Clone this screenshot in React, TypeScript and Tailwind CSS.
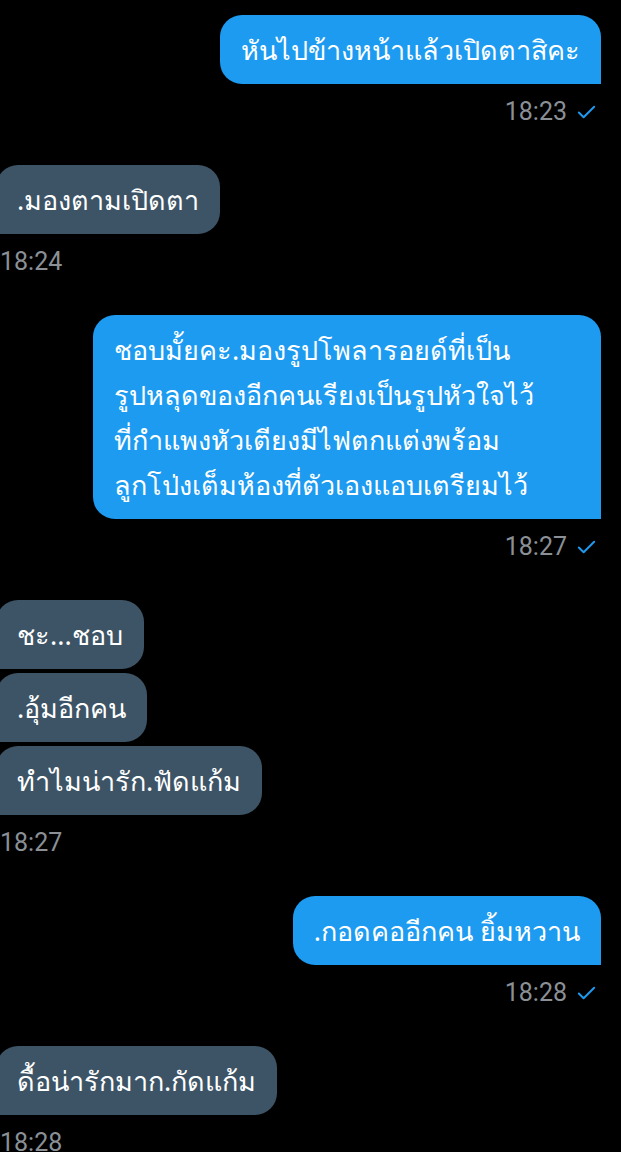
import {Check} from 'lucide-react';

type Msg = {side: 'out' | 'in'; bubbles: string[][]; time: string; wide?: boolean};

const messages: Msg[] = [
    {side: 'out', bubbles: [['หันไปข้างหน้าแล้วเปิดตาสิคะ']], time: '18:23'},
    {side: 'in', bubbles: [['.มองตามเปิดตา']], time: '18:24'},
    {
        side: 'out',
        wide: true,
        bubbles: [[
            'ชอบมั้ยคะ.มองรูปโพลารอยด์ที่เป็น',
            'รูปหลุดของอีกคนเรียงเป็นรูปหัวใจไว้',
            'ที่กำแพงหัวเตียงมีไฟตกแต่งพร้อม',
            'ลูกโป่งเต็มห้องที่ตัวเองแอบเตรียมไว้',
        ]],
        time: '18:27',
    },
    {side: 'in', bubbles: [['ชะ...ชอบ'], ['.อุ้มอีกคน'], ['ทำไมน่ารัก.ฟัดแก้ม']], time: '18:27'},
    {side: 'out', bubbles: [['.กอดคออีกคน ยิ้มหวาน']], time: '18:28'},
    {side: 'in', bubbles: [['ดื้อน่ารักมาก.กัดแก้ม']], time: '18:28'},
];

const Bubble = ({lines, out, wide}: {lines: string[]; out: boolean; wide?: boolean}) => (
    <div
        className={`px-[21px] py-[12px] text-white text-[27px] leading-[45px] whitespace-nowrap ${
            wide ? 'w-[508px]' : ''
        } ${
            out
                ? 'bg-[#1d9bf0] rounded-[22px] rounded-br-none'
                : 'bg-[#3d5466] rounded-[22px] rounded-bl-none -ml-1'
        }`}
    >
        {lines.map((l, i) => (
            <div key={i}>{l}</div>
        ))}
    </div>
);

export default function App() {
    return (
        <div
            className="w-[621px] h-[1152px] overflow-hidden bg-black pt-[15px] pr-5"
            style={{fontFamily: '"Noto Sans", Roboto, sans-serif'}}
        >
            <div className="flex flex-col gap-[38px]">
                {messages.map((m, i) => {
                    const out = m.side === 'out';
                    return (
                        <div key={i} className={`flex flex-col ${out ? 'items-end' : 'items-start'}`}>
                            <div className={`flex flex-col gap-1 ${out ? 'items-end' : 'items-start'}`}>
                                {m.bubbles.map((b, j) => (
                                    <Bubble key={j} lines={b} out={out} wide={m.wide}/>
                                ))}
                            </div>
                            <div
                                className={`mt-[13px] h-[30px] flex items-center gap-[8px] text-[25px] text-[#8a9096] ${
                                    out ? 'pr-[3px]' : 'ml-0'
                                }`}
                                style={{fontFamily: 'Roboto, sans-serif'}}
                            >
                                <span>{m.time}</span>
                                {out && <Check size={23} strokeWidth={2} className="text-[#1d9bf0]"/>}
                            </div>
                        </div>
                    );
                })}
            </div>
        </div>
    );
}
